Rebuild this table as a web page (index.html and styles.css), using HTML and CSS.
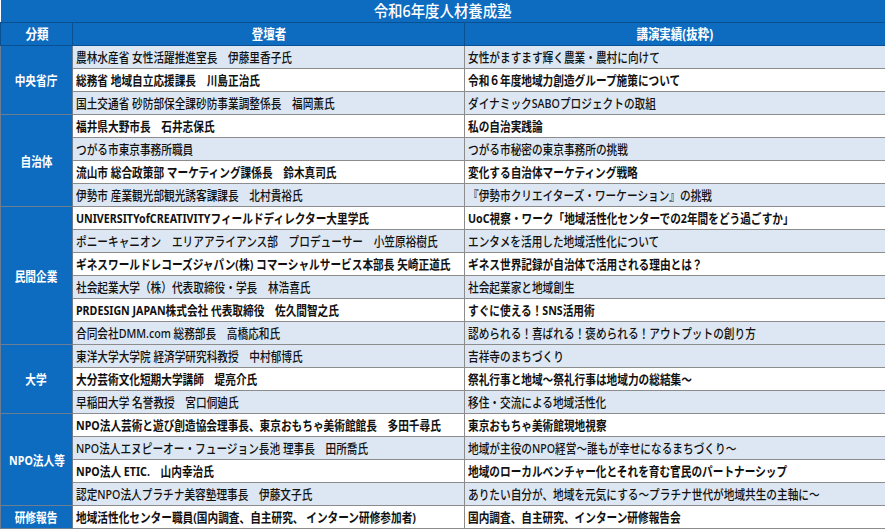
FILE: index.html
```html
<!DOCTYPE html>
<html lang="ja">
<head>
<meta charset="utf-8">
<title>令和6年度人材養成塾</title>
<link rel="stylesheet" href="styles.css">
</head>
<body>
<table class="sheet">
  <colgroup>
    <col class="c-cat">
    <col class="c-who">
    <col class="c-what">
  </colgroup>
  <thead>
    <tr><th class="title" colspan="3"><span class="t">令和6年度人材養成塾</span></th></tr>
    <tr class="head">
      <th><span class="t">分類</span></th>
      <th><span class="t">登壇者</span></th>
      <th><span class="t">講演実績(抜粋)</span></th>
    </tr>
  </thead>
  <tbody>
    <tr class="odd"><th class="cat" rowspan="3"><span class="t">中央省庁</span></th><td><span class="t">農林水産省 女性活躍推進室長　伊藤里香子氏</span></td><td><span class="t">女性がますます輝く農業・農村に向けて</span></td></tr>
    <tr class="even"><td><span class="t">総務省 地域自立応援課長　川島正治氏</span></td><td><span class="t">令和６年度地域力創造グループ施策について</span></td></tr>
    <tr class="odd"><td><span class="t">国土交通省 砂防部保全課砂防事業調整係長　福岡薫氏</span></td><td><span class="t">ダイナミックSABOプロジェクトの取組</span></td></tr>

    <tr class="even"><th class="cat" rowspan="4"><span class="t">自治体</span></th><td><span class="t">福井県大野市長　石井志保氏</span></td><td><span class="t">私の自治実践論</span></td></tr>
    <tr class="odd"><td><span class="t">つがる市東京事務所職員</span></td><td><span class="t">つがる市秘密の東京事務所の挑戦</span></td></tr>
    <tr class="even"><td><span class="t">流山市 総合政策部 マーケティング課係長　鈴木真司氏</span></td><td><span class="t">変化する自治体マーケティング戦略</span></td></tr>
    <tr class="odd"><td><span class="t">伊勢市 産業観光部観光誘客課課長　北村貴裕氏</span></td><td><span class="t">『伊勢市クリエイターズ・ワーケーション』の挑戦</span></td></tr>

    <tr class="even"><th class="cat" rowspan="6"><span class="t">民間企業</span></th><td><span class="t">UNIVERSITYofCREATIVITYフィールドディレクター大里学氏</span></td><td><span class="t">UoC視察・ワーク「地域活性化センターでの2年間をどう過ごすか」</span></td></tr>
    <tr class="odd"><td><span class="t">ポニーキャニオン　エリアアライアンス部　プロデューサー　小笠原裕樹氏</span></td><td><span class="t">エンタメを活用した地域活性化について</span></td></tr>
    <tr class="even"><td><span class="t">ギネスワールドレコーズジャパン(株) コマーシャルサービス本部長 矢崎正道氏</span></td><td><span class="t">ギネス世界記録が自治体で活用される理由とは？</span></td></tr>
    <tr class="odd"><td><span class="t">社会起業大学（株）代表取締役・学長　林浩喜氏</span></td><td><span class="t">社会起業家と地域創生</span></td></tr>
    <tr class="even"><td><span class="t">PRDESIGN JAPAN株式会社 代表取締役　佐久間智之氏</span></td><td><span class="t">すぐに使える！SNS活用術</span></td></tr>
    <tr class="odd"><td><span class="t">合同会社DMM.com 総務部長　高橋応和氏</span></td><td><span class="t">認められる！喜ばれる！褒められる！アウトプットの創り方</span></td></tr>

    <tr class="odd"><th class="cat" rowspan="3"><span class="t">大学</span></th><td><span class="t">東洋大学大学院 経済学研究科教授　中村郁博氏</span></td><td><span class="t">吉祥寺のまちづくり</span></td></tr>
    <tr class="even"><td><span class="t">大分芸術文化短期大学講師　堤亮介氏</span></td><td><span class="t">祭礼行事と地域～祭礼行事は地域力の総結集～</span></td></tr>
    <tr class="odd"><td><span class="t">早稲田大学 名誉教授　宮口侗廸氏</span></td><td><span class="t">移住・交流による地域活性化</span></td></tr>

    <tr class="even"><th class="cat" rowspan="4"><span class="t">NPO法人等</span></th><td><span class="t">NPO法人芸術と遊び創造協会理事長、東京おもちゃ美術館館長　多田千尋氏</span></td><td><span class="t">東京おもちゃ美術館現地視察</span></td></tr>
    <tr class="odd"><td><span class="t">NPO法人エヌピーオー・フュージョン長池 理事長　田所喬氏</span></td><td><span class="t">地域が主役のNPO経営～誰もが幸せになるまちづくり～</span></td></tr>
    <tr class="even"><td><span class="t">NPO法人 ETIC.　山内幸治氏</span></td><td><span class="t">地域のローカルベンチャー化とそれを育む官民のパートナーシップ</span></td></tr>
    <tr class="odd"><td><span class="t">認定NPO法人プラチナ美容塾理事長　伊藤文子氏</span></td><td><span class="t">ありたい自分が、地域を元気にする～プラチナ世代が地域共生の主軸に～</span></td></tr>

    <tr class="even"><th class="cat"><span class="t">研修報告</span></th><td><span class="t">地域活性化センター職員(国内調査、自主研究、 インターン研修参加者)</span></td><td><span class="t">国内調査、自主研究、インターン研修報告会</span></td></tr>
  </tbody>
</table>
</body>
</html>
```

FILE: styles.css
```css
html, body {
  margin: 0;
  padding: 0;
  background: #ffffff;
}

body {
  font-family: "Noto Sans", "Noto Sans CJK JP", sans-serif;
  color: #111111;
}

.sheet {
  width: 885px;
  border-collapse: collapse;
  table-layout: fixed;
}

.c-cat { width: 72px; }
.c-who { width: 392px; }
.c-what { width: 421px; }

.sheet th,
.sheet td {
  height: 22px;
  padding: 0;
  line-height: 22px;
  white-space: nowrap;
  overflow: hidden;
}

.t {
  display: inline-block;
  transform: scaleX(0.82);
  transform-origin: 50% 50%;
}

.title {
  background: #0d6cbf;
  color: #ffffff;
  font-size: 16px;
  font-weight: 500;
  text-align: center;
  border-bottom: 1px solid #0a4f8f;
}

.title .t {
  transform: scaleX(0.9);
}

.head th {
  background: #0d6cbf;
  color: #ffffff;
  font-size: 14px;
  font-weight: 700;
  text-align: center;
  border: 1px solid #0a4f8f;
  border-top: none;
}

.cat {
  background: #0d6cbf;
  color: #ffffff;
  font-size: 13px;
  font-weight: 700;
  text-align: center;
  vertical-align: middle;
  border: 1px solid #6b7d90;
}

.sheet td {
  font-size: 13px;
  padding-left: 3px;
  border: 1px solid #8c8c8c;
}

.sheet td .t {
  transform-origin: 0 50%;
}

.odd td {
  background: #dce7f3;
  font-weight: 500;
}

.even td {
  background: #ffffff;
  font-weight: 700;
}
```
